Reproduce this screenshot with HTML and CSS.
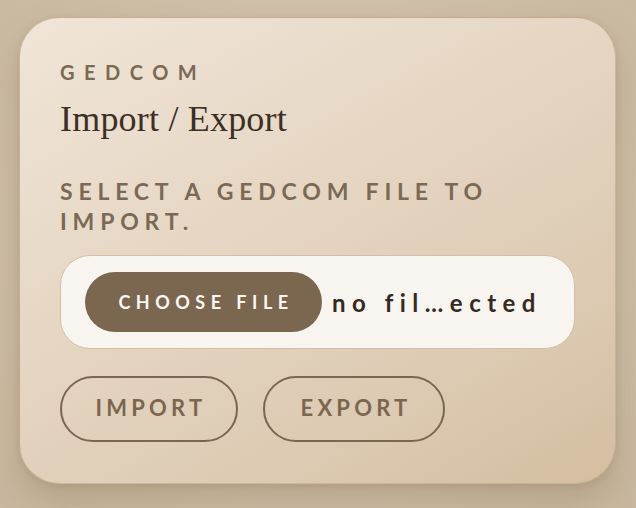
FILE: index.html
```html
<!DOCTYPE html>
<html lang="en">
<head>
<meta charset="utf-8">
<title>GEDCOM Import / Export</title>
<link rel="stylesheet" href="styles.css">
</head>
<body>
  <section class="card">
    <div class="eyebrow">GEDCOM</div>
    <h1 class="title">Import / Export</h1>
    <p class="label">Select a GEDCOM file to import.</p>
    <div class="file-box">
      <span class="choose-btn">Choose File</span>
      <span class="file-name">no fil…ected</span>
    </div>
    <div class="actions">
      <button class="outline-btn btn-import">Import</button>
      <button class="outline-btn btn-export">Export</button>
    </div>
  </section>
</body>
</html>
```

FILE: styles.css
```css
html, body {
  margin: 0;
  padding: 0;
}

body {
  width: 636px;
  height: 508px;
  overflow: hidden;
  background: radial-gradient(ellipse at 50% 45%, #d9cbb6 0%, #cfc0a9 60%, #c8b89f 100%);
  font-family: Lato, "Open Sans", sans-serif;
  padding: 17px 20px 0 19px;
  box-sizing: border-box;
}

.card {
  width: 597px;
  height: 467px;
  box-sizing: border-box;
  border-radius: 40px;
  border: 1px solid rgba(176, 150, 118, 0.55);
  background: linear-gradient(150deg, #f0e5d8 0%, #e6d7c4 40%, #dccab2 75%, #d5bd9f 100%);
  box-shadow: 0 18px 36px rgba(120, 96, 62, 0.28), 0 2px 6px rgba(120, 96, 62, 0.15);
  padding: 42px 40px 0 40px;
}

.eyebrow {
  font-size: 20px;
  line-height: 24px;
  font-weight: 700;
  letter-spacing: 9.5px;
  color: #7a6a55;
}

.title {
  margin: 14px 0 0 0;
  font-family: "Liberation Serif", serif;
  font-weight: 400;
  font-size: 36px;
  line-height: 42px;
  color: #3b2f26;
  letter-spacing: 0.2px;
}

.label {
  margin: 36px 0 0 0;
  font-size: 23px;
  line-height: 30px;
  font-weight: 700;
  letter-spacing: 5.8px;
  text-transform: uppercase;
  color: #7a6a55;
}

.file-box {
  margin-top: 19px;
  height: 94px;
  box-sizing: border-box;
  border: 1.5px solid #d3bfa6;
  border-radius: 30px;
  background: #f8f4ef;
  display: flex;
  align-items: center;
  padding: 0 24px;
  gap: 10px;
}

.choose-btn {
  width: 237px;
  height: 60px;
  border-radius: 30px;
  background: #7b6750;
  color: #fbf7f2;
  display: flex;
  align-items: center;
  justify-content: center;
  font-size: 18px;
  font-weight: 700;
  letter-spacing: 5.5px;
  padding-left: 5px;
  box-sizing: border-box;
  text-transform: uppercase;
  flex: none;
}

.file-name {
  font-size: 24px;
  font-weight: 700;
  letter-spacing: 6.5px;
  color: #352a22;
  white-space: nowrap;
}

.actions {
  margin-top: 27px;
  display: flex;
  gap: 25px;
}

.outline-btn {
  height: 66px;
  box-sizing: border-box;
  border: 2px solid #7b6750;
  border-radius: 33px;
  background: transparent;
  color: #7b6750;
  font-family: Lato, "Open Sans", sans-serif;
  font-size: 22px;
  font-weight: 700;
  letter-spacing: 4.2px;
  text-transform: uppercase;
  padding: 0 0 3px 4px;
  cursor: pointer;
}

.btn-import {
  width: 178px;
}

.btn-export {
  width: 182px;
}
```
